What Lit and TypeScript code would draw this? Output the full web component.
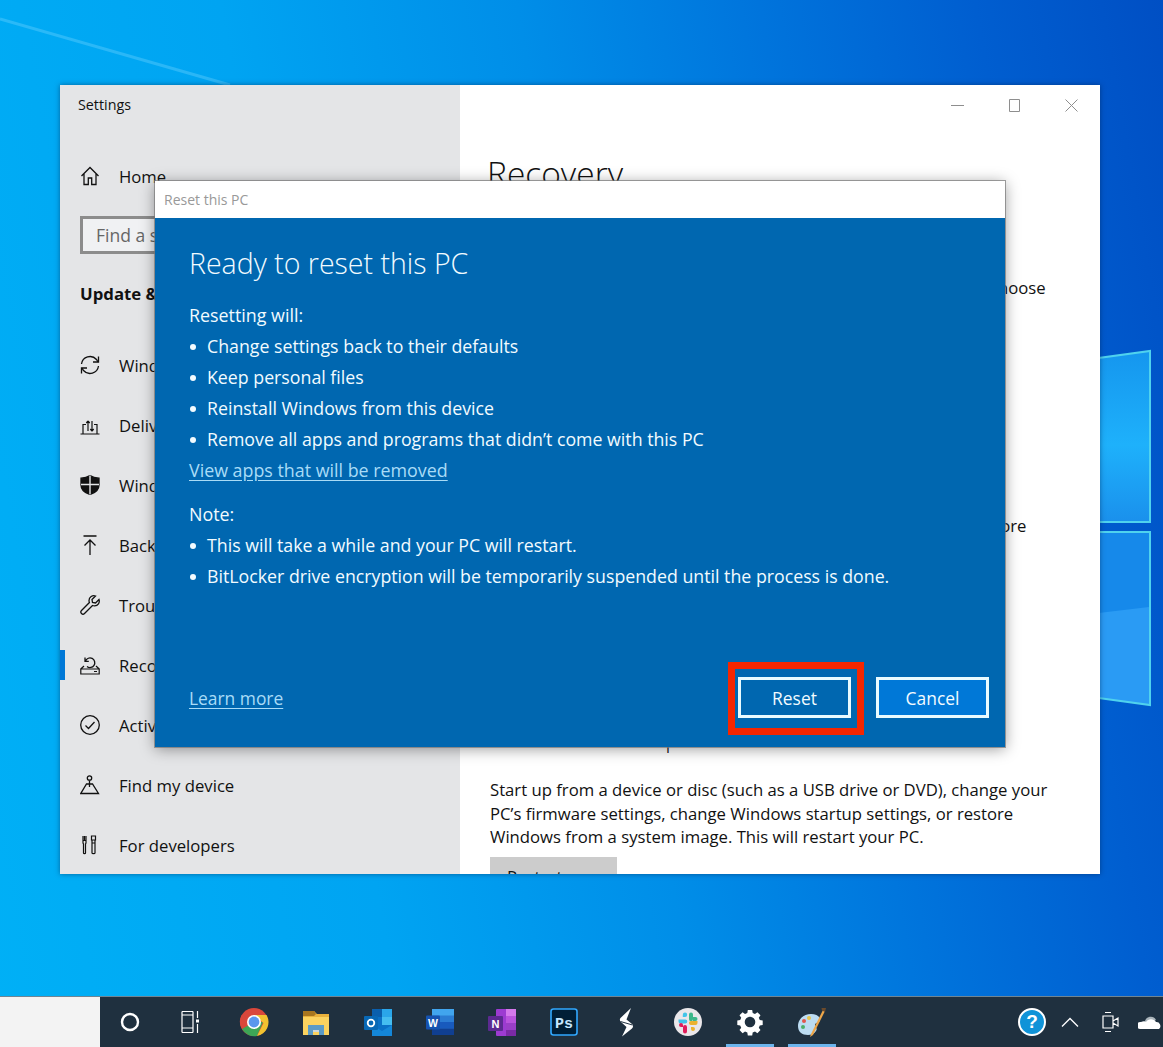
import { LitElement, html, css, svg } from 'lit';
import { customElement } from 'lit/decorators.js';

const ico = (body: unknown, size = 20) => html`<svg width=${size} height=${size} viewBox="0 0 20 20" fill="none" stroke="currentColor" stroke-width="1.3">${body}</svg>`;

const navIcons = {
  home: svg`<path d="M1.500 10 10 1.500l8.500 8.500M4 7.500V18.500h4.300v-6.500h3.400v6.500H16V7.500"/>`,
  sync: svg`<path d="M1.500 9A8.600 8.600 0 0 1 16.500 4.500L18 7M18.500 11A8.600 8.600 0 0 1 3.500 15.500L2 13"/><path d="M18.500 1.500V7H13M1.500 18.500V13H7"/>`,
  delivery: svg`<path d="M.5 19h19M3 19V9.500h3M17 19V9.500h-3" stroke-width="1.200"/><path d="M8 16V6M8 6 6.300 8M8 6l1.700 2M12 6v10M12 16l-1.700-2M12 16l1.700-2" stroke-width="1.200"/>`,
  shield: svg`<path d="M10 .5c3 2 6 2.500 9 2.700V10c0 4.500-4 8-9 9.500C5 18 1 14.500 1 10V3.200C4 3 7 2.500 10 .5Z" fill="currentColor"/><path d="M10 .5v19M1 9.500h18" stroke="#e4e5e7" stroke-width="1.400"/>`,
  backup: svg`<path d="M3.500 1h13M10 20V5M4.500 10.500 10 5l5.500 5.500"/>`,
  wrench: svg`<path d="M19 4.500 15.500 8 12.500 7.500 12 4.500 15.500 1C12.500 0 9 2 9 5.500c0 1 .2 1.500.4 2L1.500 15.500c-1 1-1 2 0 3s2 1 3 0l8-8c.5.200 1 .4 2 .4C18 11 20 7.500 19 4.500Z"/>`,
  recovery: svg`<path d="M.8 14h18.400v5H.8ZM.8 14 4 11M19.200 14 16 11M14 16.500h3" stroke-width="1.200"/><path d="M5.500 6a4.800 4.800 0 1 1 1.500 5.500M5 2.500V6.300h3.800"/>`,
  activation: svg`<circle cx="10" cy="10" r="9.300"/><path d="M5.500 10.500 8.500 13.500 14.500 7"/>`,
  find: svg`<circle cx="9.500" cy="3" r="2.200"/><path d="M9.500 5.500V12M6.500 9H12.500l6 9.500H.8Z" />`,
  dev: svg`<path d="M4.500 1v4M3 1v4.500h3V1M3 5.500V8l.500 1v9c0 1 2 1 2 0V9l.500-1V5.500M11.500 1h4v4h-4ZM12 5v3M15 5v3M12 8h3v10c0 1-3 1-3 0Z" stroke-width="1.200"/>`,
};

const navItems: [keyof typeof navIcons, string, boolean?][] = [
  ['sync', 'Windows Update'],
  ['delivery', 'Delivery Optimization'],
  ['shield', 'Windows Security'],
  ['backup', 'Backup'],
  ['wrench', 'Troubleshoot'],
  ['recovery', 'Recovery', true],
  ['activation', 'Activation'],
  ['find', 'Find my device'],
  ['dev', 'For developers'],
];

const taskIcons = [
  svg`<circle cx="15" cy="15" r="8" fill="none" stroke="#fff" stroke-width="2.400"/>`,
  svg`<path d="M5 4.500h11M5 8h11v13H5ZM5 25.500h11M5 4.500V8M16 4.500V8M5 21v4.500M16 21v4.500M20.500 4v7M20.500 17v9" fill="none" stroke="#fff" stroke-width="1.200"/><rect x="19" y="12.500" width="3" height="3" fill="#fff"/>`,
  svg`<circle cx="15" cy="15" r="14" fill="#d9473b"/><path d="M15 15 3 22a14 14 0 0 1-.3-14Z" fill="#d9473b"/><path d="M3 22a14 14 0 0 0 15 7l6-14H15Z" fill="#3da656"/><path d="M15 8h12.500A14 14 0 0 1 18 29l6.500-13Z" fill="#f2c230"/><circle cx="15" cy="15" r="7" fill="#fff"/><circle cx="15" cy="15" r="5.400" fill="#5a97ee"/>`,
  svg`<path d="M2 4h11l3 3h12v21H2Z" fill="#e9b13c"/><path d="M2 4h11l2 3-2 2H2Z" fill="#a8761f"/><path d="M2 10h26v18H2Z" fill="#fbd35f"/><path d="M7 28V18h16v10h-5v-5h-6v5Z" fill="#5b9bc7"/><rect x="12" y="23" width="6" height="2" fill="#cfd8dc"/>`,
  svg`<rect x="9" y="2" width="20" height="26" rx="1" fill="#0a70c6"/><rect x="9" y="2" width="10" height="8" fill="#0a5fad"/><rect x="19" y="2" width="10" height="8" fill="#2aa6ea"/><rect x="19" y="10" width="10" height="8" fill="#45bdf0"/><path d="M9 18l10 6 10-6v11H9Z" fill="#1487d9"/><rect x="1" y="9" width="14" height="14" rx="1" fill="#0868b5"/><circle cx="8" cy="16" r="3.300" fill="none" stroke="#fff" stroke-width="1.800"/>`,
  svg`<rect x="7" y="2" width="22" height="26" rx="1" fill="#2b7cd3"/><rect x="7" y="2" width="22" height="6.500" fill="#41a5ee"/><rect x="7" y="15" width="22" height="6.500" fill="#185abd"/><rect x="7" y="21.500" width="22" height="6.500" fill="#103f91"/><rect x="1" y="8.500" width="14" height="14" rx="1" fill="#1552b0"/><text x="8" y="19.500" font-family="Liberation Sans, sans-serif" font-size="10.500" font-weight="700" fill="#fff" text-anchor="middle">W</text>`,
  svg`<rect x="9" y="2" width="20" height="27" rx="1" fill="#9c3bd1"/><rect x="19" y="2" width="10" height="7" fill="#d479ec"/><rect x="19" y="9" width="10" height="7" fill="#b953dd"/><rect x="19" y="16" width="10" height="7" fill="#9a3fc8"/><rect x="19" y="23" width="10" height="6" fill="#7a2aa5"/><rect x="1" y="9" width="15" height="15" rx="1" fill="#5c2a91"/><text x="8.500" y="20.500" font-family="Liberation Sans, sans-serif" font-size="11" font-weight="700" fill="#fff" text-anchor="middle">N</text>`,
  svg`<rect x="2" y="2" width="26" height="26" rx="2.500" fill="#001e36" stroke="#31a8ff" stroke-width="1.600"/><text x="15" y="21" font-family="Liberation Mono, monospace" font-size="15" font-weight="700" fill="#c5e6ff" text-anchor="middle">Ps</text>`,
  svg`<path d="M20 1 9.500 11Q8 13 10 15l5.500 5L11 29.500l10-8Q23 19 21 17l-5.500-4.500Z" fill="#fff"/><path d="M9.500 14.500 21.500 18" stroke="#1f303f" stroke-width="1"/>`,
  svg`<circle cx="15" cy="15" r="14" fill="#eae7ea"/><path d="M12 5.500a2.200 2.200 0 1 1 0 4.400h-2.200V7.700A2.200 2.200 0 0 1 12 5.500ZM5.500 12.500h6.800a2 2 0 0 1 0 4H7.500a2 2 0 0 1-2-2Z" fill="#41c4e9"/><path d="M18 5.500a2 2 0 0 1 2 2v4.800a2 2 0 0 1-4 0V7.500a2 2 0 0 1 2-2ZM20 10h2.500a2 2 0 0 1 0 4H20Z" fill="#3eb78a"/><path d="M24.500 16a2 2 0 0 1-2 2H18a2 2 0 0 1 0-4h6.500ZM20 20h-2v2a2 2 0 1 0 2-2Z" fill="#ecb22e"/><path d="M12 18a2 2 0 0 1 2 2v4.500a2 2 0 0 1-4 0V20a2 2 0 0 1 2-2ZM10 18v2H8a2 2 0 1 1 2-2Z" fill="#e01e5a"/>`,
  svg`<path d="M12.800 4h4.400l.5 2.900 2.300 1 2.400-1.700 3.100 3.100-1.700 2.400 1 2.300 2.900.5v4.400l-2.900.5-1 2.300 1.700 2.400-3.100 3.100-2.400-1.700-2.300 1-.5 2.900h-4.400l-.5-2.900-2.300-1-2.400 1.700-3.100-3.100 1.700-2.400-1-2.300-2.900-.5v-4.400l2.900-.5 1-2.300-1.700-2.400 3.100-3.100 2.400 1.700 2.300-1Z" fill="#fff" transform="translate(0 -1)"/><circle cx="15" cy="15" r="5.300" fill="#1f303f"/>`,
  svg`<path d="M1 19c0-7 6-12 13-12 5 0 9 2 9 6 0 3-5 2-5 5 0 3 3 3 1 6-2 3-5 4-8 4-6 0-10-3-10-9Z" fill="#bcdcf2"/><circle cx="7" cy="14" r="2" fill="#e2564c"/><circle cx="12" cy="11" r="2" fill="#e8c54a"/><circle cx="6" cy="20" r="2" fill="#4caf6a"/><path d="M26 3 14 27l-1 3 3-2 12-24Z" fill="#eda64a"/><path d="M24.500 1h4.500l-1 4-3-1.500Z" fill="#6b4a2b"/>`,
];

@customElement('app-root')
export class AppRoot extends LitElement {
  static styles = css`
    :host {
      display: block;
      width: 1163px;
      height: 1047px;
      font-family: "Open Sans", "Noto Sans", sans-serif;
      color: #111;
    }

    .desktop {
      position: relative;
      height: 1047px;
      overflow: hidden;
      display: flex;
      flex-direction: column;
      background:
        linear-gradient(80deg, #00b0f6 0%, #00a4f2 30%, #008ee8 52%, #0074dc 70%, #005ed0 86%, #004fc4 100%);
    }

    .logo {
      position: absolute;
      left: 0;
      top: 0;
    }

    .wallpaper {
      flex: 1;
    }

    /* settings window */
    .window {
      position: absolute;
      left: 60px;
      top: 85px;
      width: 1040px;
      height: 789px;
      display: flex;
      overflow: hidden;
      background: #fff;
      box-shadow: 0 0 5px rgba(0, 30, 70, .5);
    }

    .sidebar {
      width: 400px;
      flex: none;
      background: #e4e5e7;
      box-sizing: border-box;
    }

    .app-title {
      height: 39px;
      padding: 0 0 1px 18px;
      display: flex;
      align-items: center;
      font-size: 14.300px;
    }

    .nav-row {
      position: relative;
      height: 60px;
      display: flex;
      align-items: center;
      gap: 19px;
      padding-left: 20px;
      font-size: 16.700px;
      white-space: nowrap;
    }

    .nav-row svg {
      flex: none;
    }

    .nav-row.home {
      margin-top: 21px;
    }

    .nav-row.active::before {
      content: "";
      position: absolute;
      left: 0;
      top: 15px;
      width: 5px;
      height: 30px;
      background: #0078d7;
    }

    .search {
      margin: 10px 0 0 20px;
      width: 360px;
      height: 38px;
      box-sizing: border-box;
      border: 3px solid #8c8c8c;
      background: #f0f1f3;
      color: #666;
      padding-left: 13px;
      display: flex;
      align-items: center;
      font-size: 17.500px;
    }

    .group {
      height: 38px;
      margin: 20px 0 23px 20px;
      display: flex;
      align-items: center;
      font-size: 16.800px;
      font-weight: 700;
    }

    .main {
      flex: 1;
      min-width: 0;
      display: flex;
      flex-direction: column;
      padding-left: 30px;
    }

    .caption {
      height: 40px;
      flex: none;
      margin-left: -30px;
      display: flex;
      justify-content: flex-end;
      align-items: center;
      color: #8e8e8e;
    }

    .caption div {
      width: 57px;
      display: flex;
      justify-content: center;
    }

    .main h1 {
      margin: 24px 0 0 -3px;
      font-size: 33.500px;
      line-height: 48px;
      font-weight: 300;
    }

    .main h2 {
      margin: 0;
      font-size: 24px;
      line-height: 32px;
      font-weight: 300;
    }

    .main p {
      margin: 0;
      width: 565px;
      font-size: 16.700px;
      line-height: 23.500px;
    }

    .main .gray {
      width: 127px;
      height: 40px;
      flex: none;
      background: #ccc;
      font-size: 16.700px;
      display: flex;
      align-items: center;
      justify-content: center;
    }

    .reset-head { margin-top: 27px !important; }
    .reset-body { margin-top: 20px !important; }
    .reset-btn { margin-top: 12px; }
    .back-head { margin-top: 65px !important; }
    .back-body { margin-top: 18px !important; white-space: nowrap; letter-spacing: -.07px; }
    .adv-head { margin-top: 185px !important; }
    .adv-body { margin-top: 24px !important; }
    .restart { margin-top: 8px; }

    /* dialog */
    .dialog {
      position: absolute;
      left: 155px;
      top: 181px;
      width: 850px;
      height: 566px;
      display: flex;
      flex-direction: column;
      box-shadow: 0 0 0 1px rgba(120, 120, 120, .7), 0 2px 14px rgba(0, 0, 0, .4);
    }

    .dialog-title {
      height: 36px;
      padding: 0 0 1px 9px;
      flex: none;
      background: #fff;
      color: #999;
      display: flex;
      align-items: center;
      font-size: 14px;
    }

    .dialog-body {
      flex: 1;
      background: #0067b0;
      color: #f2fbff;
      padding: 0 16px 29px 34px;
      display: flex;
      flex-direction: column;
      font-size: 17.850px;
      line-height: 31px;
    }

    .dialog-body h3 {
      margin: 24px 0 0;
      font-size: 28.500px;
      line-height: 42px;
      font-weight: 300;
    }

    .dialog-body ul {
      margin: 0;
      padding: 0;
      list-style: none;
      font-size: 17.750px;
    }

    .dialog-body li {
      display: flex;
      align-items: center;
    }

    .dialog-body li::before {
      content: "";
      width: 6px;
      height: 6px;
      margin: 0 11px 0 1px;
      border-radius: 50%;
      background: #f2fbff;
    }

    .lead { margin-top: 16px; }
    .note { margin-top: 13px; }

    .link {
      color: #a9dcf7;
      text-decoration: underline;
      text-underline-offset: 3px;
    }

    .footer {
      margin-top: auto;
      display: flex;
      align-items: center;
      font-size: 17.400px;
    }

    .footer .link {
      position: relative;
      top: 1px;
    }

    .btn {
      position: relative;
      width: 113px;
      height: 41px;
      box-sizing: border-box;
      border: 3px solid #e9fbff;
      padding-top: 1px;
      display: flex;
      align-items: center;
      justify-content: center;
      color: #f2fbff;
    }

    .btn.reset {
      margin-left: auto;
      background: #0067b0;
    }

    .btn.cancel {
      margin-left: 25px;
      background: #0078d7;
    }

    .callout {
      position: absolute;
      left: -13px;
      top: -18px;
      width: 136px;
      height: 73px;
      box-sizing: border-box;
      border: 7px solid #f52600;
    }

    /* taskbar */
    .taskbar {
      height: 51px;
      flex: none;
      position: relative;
      display: flex;
      align-items: center;
      background: #1f303f;
      border-top: 1px solid #6f8594;
      box-sizing: border-box;
    }

    .search-box {
      width: 100px;
      height: 100%;
      flex: none;
      background: #f3f3f3;
    }

    .task {
      position: relative;
      width: 62px;
      height: 100%;
      flex: none;
      display: flex;
      align-items: center;
      justify-content: center;
    }

    .search-box + .task {
      margin-left: -1px;
    }

    .task.open::after {
      content: "";
      position: absolute;
      left: 7px;
      right: 7px;
      bottom: 0;
      height: 3px;
      background: #6cb4ec;
    }

    .tray {
      margin: 0 -7px 0 auto;
      display: flex;
      align-items: center;
      color: #fff;
    }

    .tray > div {
      width: 40px;
      display: flex;
      justify-content: center;
    }

    .help {
      margin-left: 4px;
      width: 28px;
      height: 28px;
      box-sizing: border-box;
      border-radius: 50%;
      border: 2.500px solid #fff;
      background: #0f93d8;
      color: #fff;
      font: 700 19px/23px "Liberation Sans", sans-serif;
      text-align: center;
    }
  `;

  render() {
    return html`
      <div class="desktop">
        <svg class="logo" width="1163" height="1047" viewBox="0 0 1163 1047">
          <defs>
            <linearGradient id="p1" x1="0" y1="0" x2="0" y2="1"><stop offset="0" stop-color="#1596ee"/><stop offset=".55" stop-color="#1eb1fb"/><stop offset="1" stop-color="#1a90ec"/></linearGradient>
          </defs>
          <path d="M1040 366 1150 351V522H1040Z" fill="url(#p1)" stroke="#4fd2ee" stroke-width="2"/>
          <path d="M1040 532H1150V705L1040 690Z" fill="#2a9bf4" stroke="#4fd2ee" stroke-width="2"/>
          <path d="M1040 620 1149 607V533H1040Z" fill="#1689ea"/>
          <path d="M0 19 230 85" stroke="rgba(120,215,255,.35)" stroke-width="3"/>
        </svg>
        <div class="wallpaper"></div>

        <div class="window">
          <aside class="sidebar">
            <div class="app-title">Settings</div>
            <div class="nav-row home">${ico(navIcons.home)}Home</div>
            <div class="search">Find a setting</div>
            <div class="group">Update &amp; Security</div>
            ${navItems.map(([icon, label, active]) => html`
              <div class="nav-row ${active ? 'active' : ''}">${ico(navIcons[icon])}${label}</div>
            `)}
          </aside>
          <section class="main">
            <div class="caption">
              <div><svg width="13" height="13" viewBox="0 0 13 13" stroke="currentColor"><path d="M0 6.500h13"/></svg></div>
              <div><svg width="13" height="13" viewBox="0 0 13 13" fill="none" stroke="currentColor"><path d="M1.500.5h10v12h-10Z"/></svg></div>
              <div><svg width="13" height="13" viewBox="0 0 13 13" stroke="currentColor"><path d="M.5.5l12 12M12.500.5l-12 12"/></svg></div>
            </div>
            <h1>Recovery</h1>
            <h2 class="reset-head">Reset this PC</h2>
            <p class="reset-body">If your PC isn’t running well, resetting it might help. This lets you choose<br>whether to keep your personal files or remove them, and then<br>reinstalls Windows.</p>
            <div class="gray reset-btn">Get started</div>
            <h2 class="back-head">Go back to the previous version</h2>
            <p class="back-body">If this version of Windows 10 isn’t working, try going back. Learn more</p>
            <h2 class="adv-head">Advanced startup</h2>
            <p class="adv-body">Start up from a device or disc (such as a USB drive or DVD), change your PC’s firmware settings, change Windows startup settings, or restore Windows from a system image. This will restart your PC.</p>
            <div class="gray restart">Restart now</div>
          </section>
        </div>

        <div class="dialog">
          <div class="dialog-title">Reset this PC</div>
          <div class="dialog-body">
            <h3>Ready to reset this PC</h3>
            <div class="lead">Resetting will:</div>
            <ul>
              <li>Change settings back to their defaults</li>
              <li>Keep personal files</li>
              <li>Reinstall Windows from this device</li>
              <li>Remove all apps and programs that didn’t come with this PC</li>
            </ul>
            <div class="link">View apps that will be removed</div>
            <div class="note">Note:</div>
            <ul>
              <li>This will take a while and your PC will restart.</li>
              <li>BitLocker drive encryption will be temporarily suspended until the process is done.</li>
            </ul>
            <div class="footer">
              <span class="link">Learn more</span>
              <div class="btn reset">Reset<span class="callout"></span></div>
              <div class="btn cancel">Cancel</div>
            </div>
          </div>
        </div>

        <footer class="taskbar">
          <div class="search-box"></div>
          ${taskIcons.map((body, i) => html`
            <div class="task ${i === 10 || i === 11 ? 'open' : ''}">
              <svg width="30" height="30" viewBox="0 0 30 30">${body}</svg>
            </div>
          `)}
          <div class="tray">
            <div><div class="help">?</div></div>
            <div><svg width="20" height="20" viewBox="0 0 20 20" fill="none" stroke="#fff" stroke-width="1.300"><path d="M2 14.500 10 6.500l8 8"/></svg></div>
            <div><svg width="20" height="24" viewBox="0 0 20 24" fill="none" stroke="#fff" stroke-width="1.200"><path d="M3 6h10v12H3ZM13 11l5-3v8l-5-3M5 2.500h6M5 21.500h6"/></svg></div>
            <div><svg width="24" height="18" viewBox="0 0 24 18"><path d="M7 8a6 6 0 0 1 11-1l-9 5-4-1Z" fill="#aab4bb"/><path d="M2 16a3.500 3.500 0 0 1 1-7c2-1 4-1 5 0a6 6 0 0 1 10 0 4 4 0 0 1 3 7Z" fill="#fff"/></svg></div>
          </div>
        </footer>
      </div>
    `;
  }
}
